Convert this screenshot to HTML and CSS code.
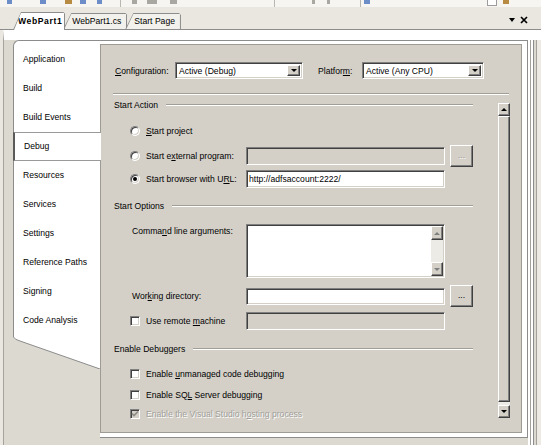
FILE: index.html
```html
<!DOCTYPE html>
<html lang="en">
<head>
  <meta charset="UTF-8" />
  <title>WebPart1 - Debug</title>
  <link rel="stylesheet" href="styles.css">
</head>
<body>
  <div class="toolbar">
    <i class="blue w5"></i><i class="blue w6"></i><i class="brown w7"></i><i class="blue w6"></i><i class="blue w5"></i>
    <i class="sep"></i><i class="gray w5"></i><i class="gray w10"></i><i class="gray w7"></i>
    <i class="sep"></i><i class="gray w3"></i><i class="gray w3"></i><i class="sep"></i><i class="blue w6"></i>
    <i class="box"></i><i class="brown w6"></i>
  </div>

  <div class="tabbar">
    <div class="tab active"><span>WebPart1</span></div>
    <div class="tab"><span>WebPart1.cs</span></div>
    <div class="tab"><span>Start Page</span></div>
    <div class="tab-tools">
      <i class="drop"></i>
      <svg width="8" height="8" viewBox="0 0 8 8"><path d="M1 1L7 7M7 1L1 7" stroke="#000" stroke-width="1.7"/></svg>
    </div>
  </div>

  <div class="doc">
    <div class="frame">
      <div class="sidebar">
        <ul class="nav">
          <li>Application</li>
          <li>Build</li>
          <li>Build Events</li>
          <li class="active">Debug</li>
          <li>Resources</li>
          <li>Services</li>
          <li>Settings</li>
          <li>Reference Paths</li>
          <li>Signing</li>
          <li>Code Analysis</li>
        </ul>
        <svg class="nav-tail" width="87" height="32" viewBox="0 0 87 32">
          <path d="M0 0H87V32L7 4Q1.5 2.5 0.5 0Z" fill="#fff"/>
          <path d="M0.5 0Q1.5 2.5 7 4L87 32" fill="none" stroke="#8c8c8c"/>
        </svg>
      </div>

      <div class="panel-wrap">
        <div class="panel">
          <div class="config">
            <span class="lbl-config"><u>C</u>onfiguration:</span>
            <div class="select wide"><span>Active (Debug)</span><b class="arrow"><i class="tri-down"></i></b></div>
            <span class="lbl-platform">Platfor<u>m</u>:</span>
            <div class="select narrow"><span>Active (Any CPU)</span><b class="arrow"><i class="tri-down"></i></b></div>
          </div>
          <div class="sep-line"></div>

          <div class="body">
            <div class="form">
              <div class="hdr">Start Action</div>

              <div class="fr mt12 h14">
                <label class="opt"><i class="radio"></i><span><u>S</u>tart project</span></label>
              </div>
              <div class="fr mt7 h18">
                <label class="opt"><i class="radio"></i><span>Start e<u>x</u>ternal program:</span></label>
                <div class="text off"></div>
                <span></span>
                <div class="btn off">...</div>
              </div>
              <div class="fr mt7 h18">
                <label class="opt"><i class="radio on"></i><span>Start browser with U<u>R</u>L:</span></label>
                <div class="text">http://adfsaccount:2222/</div>
              </div>

              <div class="hdr mt11">Start Options</div>

              <div class="fr mt11 h54">
                <span class="plain top">Comma<u>n</u>d line arguments:</span>
                <div class="text area">
                  <div class="ascroll">
                    <b class="sbtn"><i class="tri-up dim"></i></b>
                    <b class="atrack"></b>
                    <b class="sbtn"><i class="tri-down dim"></i></b>
                  </div>
                </div>
              </div>
              <div class="fr mt7 h22">
                <span class="plain">Wor<u>k</u>ing directory:</span>
                <div class="text h17"></div>
                <span></span>
                <div class="btn">...</div>
              </div>
              <div class="fr mt5 h18">
                <label class="opt"><i class="check"></i><span>Use remote <u>m</u>achine</span></label>
                <div class="text off"></div>
              </div>

              <div class="hdr mt12">Enable Debuggers</div>

              <div class="fr mt11 h14">
                <label class="opt wide-opt"><i class="check"></i><span>Enable <u>u</u>nmanaged code debugging</span></label>
              </div>
              <div class="fr mt7 h14">
                <label class="opt wide-opt"><i class="check"></i><span>Enable SQ<u>L</u> Server debugging</span></label>
              </div>
              <div class="fr mt5 h14">
                <label class="opt wide-opt disabled">
                  <i class="check off">
                    <svg width="8" height="8" viewBox="0 0 8 8"><path d="M1 3.5L3 5.5L7 1.5" fill="none" stroke="#8d8b85" stroke-width="1.6"/></svg>
                  </i>
                  <span>Enable the Visual Studio h<u>o</u>sting process</span>
                </label>
              </div>
            </div>

            <div class="vscroll">
              <b class="sbtn"><i class="tri-up"></i></b>
              <b class="thumb"></b>
              <b class="track"></b>
              <b class="sbtn"><i class="tri-down"></i></b>
            </div>
          </div>
        </div>
      </div>
    </div>
    <div class="edge"></div>
  </div>
</body>
</html>
```

FILE: styles.css
```css
* { box-sizing: border-box; }
body {
  margin: 0;
  width: 541px;
  height: 445px;
  overflow: hidden;
  background: #e9e7df;
  font-family: "Liberation Sans", Arial, sans-serif;
  font-size: 8.6px;
  color: #000;
}
u { text-decoration: underline; text-underline-offset: 1px; }

/* top toolbar remnant */
.toolbar {
  height: 7px;
  display: flex;
  align-items: flex-start;
  background: #f6f5f1;
}
.toolbar i { display: block; height: 4px; }
.toolbar .blue { background: #6d8dc9; }
.toolbar .brown { background: #b88b43; }
.toolbar .gray { background: #a8a7a2; }
.toolbar .sep { width: 1px; height: 7px; background: #b9b7af; }
.toolbar .box { width: 10px; height: 6px; background: #fff; border: 1px solid #9c9c9c; border-top: none; }
.w3 { width: 3px; } .w5 { width: 5px; } .w6 { width: 6px; } .w7 { width: 7px; } .w10 { width: 10px; }
.toolbar i:nth-child(1) { margin-left: 7px; }
.toolbar i:nth-child(2) { margin-left: 28px; }
.toolbar i:nth-child(3) { margin-left: 19px; }
.toolbar i:nth-child(4) { margin-left: 8px; }
.toolbar i:nth-child(5) { margin-left: 11px; }
.toolbar i:nth-child(6) { margin-left: 18px; }
.toolbar i:nth-child(7) { margin-left: 11px; }
.toolbar i:nth-child(8) { margin-left: 10px; }
.toolbar i:nth-child(9) { margin-left: 13px; }
.toolbar i:nth-child(10) { margin-left: 97px; }
.toolbar i:nth-child(11) { margin-left: 37px; }
.toolbar i:nth-child(12) { margin-left: 12px; }
.toolbar i:nth-child(13) { margin-left: 30px; }
.toolbar i:nth-child(14) { margin-left: 3px; }
.toolbar i:nth-child(15) { margin-left: 117px; }
.toolbar i:nth-child(16) { margin-left: 6px; }

/* document tabs */
.tabbar {
  height: 23px;
  display: flex;
  align-items: flex-end;
  padding-left: 13px;
  border-bottom: 1px solid #8c8c8c;
  background: #e9e7df;
}
.tab {
  background: #8c8c8c;
  padding: 1px 1px 0 1px;
  margin-left: -2px;
  clip-path: polygon(0 100%, 8px 0, calc(100% - 2px) 0, 100% 2px, 100% 100%);
}
.tab span {
  display: block;
  height: 15px;
  line-height: 15px;
  padding: 0 5px 0 8px;
  background: #f2f1eb;
  clip-path: polygon(0 100%, 7px 0, 100% 0, 100% 100%);
}
.tab.active {
  margin-left: 0;
  margin-bottom: -1px;
  position: relative;
  z-index: 1;
}
.tab.active span {
  height: 17px;
  line-height: 16px;
  padding: 0 2px 0 4px;
  background: #fff;
  font-weight: bold;
  letter-spacing: 0.6px;
}
.tab-tools {
  margin-left: auto;
  align-self: center;
  display: flex;
  align-items: center;
  gap: 5px;
  padding-right: 13px;
  margin-top: 3px;
}
.drop {
  width: 0;
  height: 0;
  border-left: 3.5px solid transparent;
  border-right: 3.5px solid transparent;
  border-top: 4px solid #000;
}

/* document area */
.doc {
  display: flex;
  height: 415px;
  margin-left: 3px;
  border-left: 1px solid #a5a39b;
  border-top: 10px solid #fff;
  background: #dcd9d1;
  padding-left: 9px;
}
.frame {
  display: flex;
  width: 515px;
  height: 398px;
}
.sidebar {
  width: 87px;
  display: flex;
  flex-direction: column;
}
.nav {
  list-style: none;
  margin: 0;
  padding: 4px 0 2px;
  background: #fff;
  border-left: 1px solid #8c8c8c;
  border-top: 1px solid #8c8c8c;
  border-top-left-radius: 6px;
}
.nav li {
  height: 29px;
  line-height: 29px;
  padding-left: 9px;
}
.nav li.active {
  position: relative;
  z-index: 1;
  margin: 0 -1px 0 -1px;
  padding-left: 9px;
  line-height: 27px;
  background: #fff;
  border-top: 1px solid #9a9a9a;
  border-bottom: 1px solid #9a9a9a;
  border-left: 2px solid #5a5a5a;
}
.nav-tail { display: block; }

.panel-wrap {
  flex: 1;
  background: #fff;
  border-top: 1px solid #8c8c8c;
  border-right: 1px solid #8c8c8c;
  border-bottom: 1px solid #8c8c8c;
  padding: 3px 5px 4px 0;
}
.panel {
  height: 100%;
  background: #d4d0c8;
  border: 1px solid #9d9b94;
}

.config {
  display: flex;
  align-items: center;
  height: 17px;
  margin-top: 17px;
  padding-left: 14px;
}
.lbl-config { width: 60px; }
.lbl-platform { width: 44px; margin-left: 15px; }
.select {
  display: flex;
  height: 17px;
  padding: 2px;
  background: #fff;
  border: 1px solid;
  border-color: #808080 #fff #fff #808080;
  box-shadow: inset 1px 1px #404040, inset -1px -1px #d4d0c8;
}
.select.wide { width: 128px; }
.select.narrow { width: 122px; }
.select span { flex: 1; line-height: 13px; padding-left: 1px; }
.arrow, .sbtn {
  display: flex;
  align-items: center;
  justify-content: center;
  background: #d4d0c8;
  border: 1px solid;
  border-color: #fff #404040 #404040 #fff;
  box-shadow: inset -1px -1px #808080;
}
.arrow { width: 13px; }

.tri-down, .tri-up {
  width: 0;
  height: 0;
  border-left: 3px solid transparent;
  border-right: 3px solid transparent;
}
.tri-down { border-top: 3px solid #000; }
.tri-up { border-bottom: 3px solid #000; }
.tri-down.dim { border-top-color: #808080; }
.tri-up.dim { border-bottom-color: #808080; }

.sep-line {
  margin: 14px 0 0 12px;
  width: 396px;
  border-top: 1px solid #a09e96;
  border-bottom: 1px solid #fff;
}

.body {
  display: flex;
  margin: 3px 0 0 12px;
}
.form { width: 360px; }

.hdr {
  display: flex;
  align-items: center;
  height: 14px;
  padding-left: 1px;
}
.hdr::after {
  content: "";
  flex: 1;
  margin-left: 8px;
  border-top: 1px solid #a09e96;
  border-bottom: 1px solid #fff;
}

.fr {
  display: grid;
  grid-template-columns: 133px 199px 5px 23px;
  align-items: center;
}
.mt5 { margin-top: 5px; }
.mt7 { margin-top: 7px; }
.mt11 { margin-top: 11px; }
.mt12 { margin-top: 12px; }
.h14 { height: 14px; }
.h18 { height: 18px; }
.h22 { height: 22px; }
.h54 { height: 54px; }

.opt {
  display: flex;
  align-items: center;
  gap: 6px;
  padding-left: 17px;
  white-space: nowrap;
}
.wide-opt { grid-column: 1 / 5; }
.plain { padding-left: 19px; }
.plain.top { align-self: start; padding-top: 2px; }

.radio, .check {
  display: flex;
  align-items: center;
  justify-content: center;
  width: 10px;
  height: 10px;
  flex: none;
  background: #fff;
  border: 1px solid;
  border-color: #808080 #fff #fff #808080;
  box-shadow: inset 1px 1px #404040, inset -1px -1px #d4d0c8;
}
.radio { border-radius: 50%; }
.radio.on::after {
  content: "";
  width: 4px;
  height: 4px;
  border-radius: 50%;
  background: #000;
}
.check.off { background: #d4d0c8; }
.disabled { color: #a19f99; text-shadow: 1px 1px 0 #fff; }

.text {
  height: 18px;
  line-height: 16px;
  padding-left: 2px;
  background: #fff;
  border: 1px solid;
  border-color: #808080 #fff #fff #808080;
  box-shadow: inset 1px 1px #404040, inset -1px -1px #d4d0c8;
  white-space: nowrap;
}
.text.off { background: #d4d0c8; }
.text.h17 { height: 17px; }
.text.area {
  height: 54px;
  display: flex;
  justify-content: flex-end;
  padding: 1px;
}
.ascroll {
  width: 12px;
  display: flex;
  flex-direction: column;
}
.ascroll .sbtn { height: 14px; }
.atrack { flex: 1; background: #ecebe6; }

.btn {
  grid-column: 4;
  display: flex;
  align-items: center;
  justify-content: center;
  height: 22px;
  background: #d4d0c8;
  border: 1px solid;
  border-color: #fff #404040 #404040 #fff;
  box-shadow: inset -1px -1px #808080;
  padding-bottom: 2px;
}
.btn.off { color: #a19f99; text-shadow: 1px 1px 0 #fff; }

.vscroll {
  width: 12px;
  height: 315px;
  margin: 5px 0 0 25px;
  display: flex;
  flex-direction: column;
}
.vscroll .sbtn { height: 13px; }
.thumb {
  height: 286px;
  background: #d4d0c8;
  border: 1px solid;
  border-color: #fff #404040 #404040 #fff;
  box-shadow: inset -1px -1px #808080;
}
.track { height: 3px; background: #ecebe6; }

.edge {
  width: 13px;
  background: linear-gradient(to right, #fff 0 2px, #a3a19a 2px 3px, #fff 3px 5px, #8c8c8c 5px 6px, #dcd9d1 6px 8px, #a3a19a 8px 9px, #eceae3 9px);
}
```
